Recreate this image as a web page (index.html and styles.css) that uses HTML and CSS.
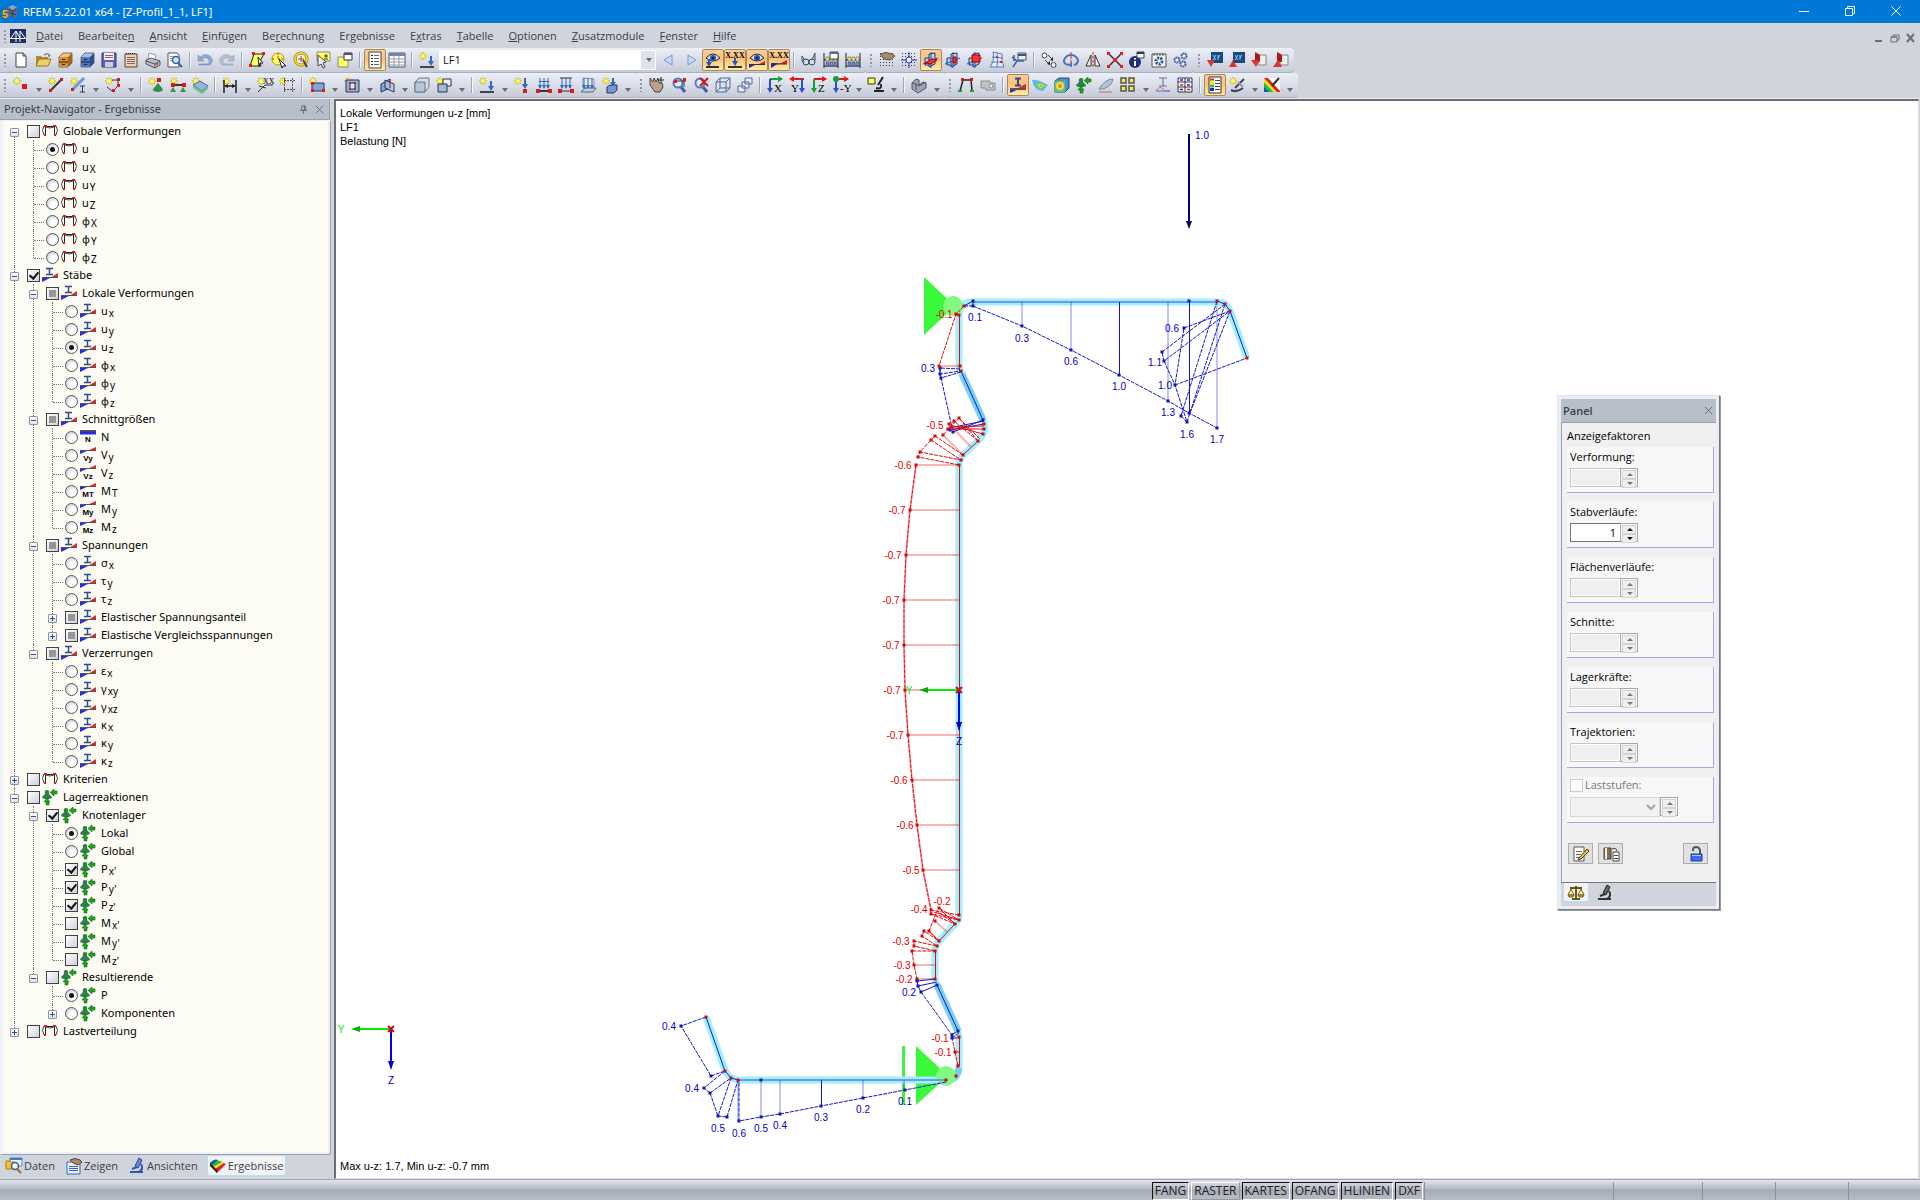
FILE: index.html
```html
<!DOCTYPE html>
<html lang="de">

<head>
    <meta charset="UTF-8">
    <meta name="viewport" content="width=device-width, initial-scale=1.0">
    <title>RFEM 5.22.01 x64 - [Z-Profil_1_1, LF1]</title>
    <link rel="stylesheet" href="styles.css">
</head>

<body>
    <header class="titlebar">
        <svg class="app-icon" viewBox="0 0 18 18">
            <path d="M7 3l5-2 5 3v8l-4 4-6-4z" fill="#5b6b82" />
            <path d="M7 3l5-2 5 3-5 3z" fill="#93a2b8" />
            <path d="M8 6l4 2v7M12 8l4-3M8 10l8 2" stroke="#26364d" fill="none" />
            <text x="0" y="16" class="app-five">5</text>
        </svg>
        <span class="title">RFEM 5.22.01 x64 - [Z-Profil_1_1, LF1]</span>
        <div class="window-buttons">
            <button aria-label="Minimieren"><svg viewBox="0 0 12 12"><path d="M1 6.500h10" /></svg></button>
            <button aria-label="Wiederherstellen"><svg viewBox="0 0 12 12"><path d="M1.500 3.500h7v7h-7zM3.500 3.500v-2h7v7h-2" /></svg></button>
            <button aria-label="Schließen"><svg viewBox="0 0 12 12"><path d="M1.500 1.500l9 9M10.500 1.500l-9 9" /></svg></button>
        </div>
    </header>

    <nav class="menubar">
        <span class="grip"></span>
        <svg class="menu-icon" viewBox="0 0 16 14">
            <path d="M0 0h16v14H0z" fill="#1d2f6b" />
            <path d="M0 9.500h16M6 2v11M10 2v11M6 2L1 9M6 2l4 7M10 2l5 7" stroke="#fff" fill="none" />
        </svg>
        <a href="#"><u>D</u>atei</a>
        <a href="#">Bearbeite<u>n</u></a>
        <a href="#"><u>A</u>nsicht</a>
        <a href="#"><u>E</u>infügen</a>
        <a href="#">Be<u>r</u>echnung</a>
        <a href="#">Er<u>g</u>ebnisse</a>
        <a href="#">E<u>x</u>tras</a>
        <a href="#"><u>T</u>abelle</a>
        <a href="#"><u>O</u>ptionen</a>
        <a href="#"><u>Z</u>usatzmodule</a>
        <a href="#"><u>F</u>enster</a>
        <a href="#"><u>H</u>ilfe</a>
        <div class="doc-buttons">
            <button aria-label="Fenster minimieren"><svg viewBox="0 0 10 10"><path d="M1 8h7" stroke-width="2" /></svg></button>
            <button aria-label="Fenster wiederherstellen"><svg viewBox="0 0 10 10"><path d="M1 4h6v5H1zM3 4V2h6v5H7M1 4h6" /></svg></button>
            <button aria-label="Fenster schließen"><svg viewBox="0 0 10 10"><path d="M1 1l7 8M8 1L1 9" stroke-width="2" /></svg></button>
        </div>
    </nav>

    <div class="toolbar">
        <div class="bar" data-icons="new open drawer drawerBlue save report print preview | undo redo | selPoly selCircle selRing selArrow selWin | navList* table | loadcase">
            <div class="combo">
                <select aria-label="Lastfall">
                    <option>LF1</option>
                </select>
            </div>
        </div>
        <div class="bar joined" data-icons="prev next eyeLoad* xxLoad* eyeRes* xxRes* | glasses abacusDoc abacus"></div>
        <div class="bar" data-icons="gridHand gridSnap planeXY* planeXZ planeYZ gridWarp clip | move rotate mirror scale info settings gears"></div>
        <div class="bar" data-icons="dbOut dbIn pdfOut pdfIn"></div>
    </div>
    <div class="toolbar">
        <div class="bar" data-icons="node v line member v arc v | support lineSup surfSup | dim v xx guides | surface v opening v intersect v solid solids v | loadcase v nodeLoad memberLoad lineLoad surfLoad freeLoad v"></div>
        <div class="bar" data-icons="pan zoomWin zoomAll cube cubes | viewX viewY viewZ viewNY v scope v | shape v"></div>
        <div class="bar" data-icons="frame camera | beam* contour cubeColor reaction deform panes v section tables | legend* wand v rainbow v"></div>
    </div>

    <main>
        <aside class="navigator">
            <div class="nav-head">
                <h2>Projekt-Navigator - Ergebnisse</h2>
                <button aria-label="Anheften"><svg viewBox="0 0 10 10"><path d="M3 1h4v5H3zM1 6h8M5 6v4M6 1v5" /></svg></button>
                <button aria-label="Schließen"><svg viewBox="0 0 10 10"><path d="M1 1l8 8M9 1L1 9" /></svg></button>
            </div>
            <div class="tree-box">
                <ul class="tree" id="tree"></ul>
            </div>
            <div class="nav-tabs">
                <button><svg class="icon" data-icon="tabData"></svg>Daten</button>
                <button><svg class="icon" data-icon="tabShow"></svg>Zeigen</button>
                <button><svg class="icon" data-icon="scopeBlue"></svg>Ansichten</button>
                <button class="active"><svg class="icon" data-icon="rainbowSheet"></svg>Ergebnisse</button>
            </div>
        </aside>

        <section class="view">
            <svg class="drawing" id="drawing" width="1582" height="1076" viewBox="336 101 1582 1076"></svg>
            <div class="view-title">
                <p>Lokale Verformungen u-z [mm]</p>
                <p>LF1</p>
                <p>Belastung [N]</p>
            </div>
            <p class="view-result">Max u-z: 1.7, Min u-z: -0.7 mm</p>

            <div class="panel">
                <div class="panel-head">
                    <h2>Panel</h2>
                    <button aria-label="Panel schließen"><svg viewBox="0 0 10 10"><path d="M1 1l8 8M9 1L1 9" /></svg></button>
                </div>
                <div class="panel-body">
                    <h3>Anzeigefaktoren</h3>
                    <div id="factors"></div>
                    <div class="factor">
                        <label class="steps"><input type="checkbox" disabled>Laststufen:</label>
                        <div class="spin-row">
                            <select class="step-select" aria-label="Laststufe" disabled></select>
                            <span class="spin">
                                <button class="up" aria-label="mehr" disabled></button>
                                <button class="down" aria-label="weniger" disabled></button>
                            </span>
                        </div>
                    </div>
                    <div class="panel-buttons">
                        <button aria-label="Bearbeiten"><svg class="icon" data-icon="edit"></svg></button>
                        <button aria-label="Kopieren"><svg class="icon" data-icon="copyDb"></svg></button>
                        <button class="lock" aria-label="Sperren"><svg class="icon" data-icon="lock"></svg></button>
                    </div>
                </div>
                <div class="panel-tabs">
                    <button class="active" aria-label="Faktoren"><svg class="icon" data-icon="scales"></svg></button>
                    <button aria-label="Filter"><svg class="icon" data-icon="scopeDark"></svg></button>
                </div>
            </div>
        </section>
    </main>

    <footer class="statusbar">
        <button>FANG</button>
        <button class="off">RASTER</button>
        <button>KARTES</button>
        <button>OFANG</button>
        <button>HLINIEN</button>
        <button>DXF</button>
        <span class="field f1"></span>
        <span class="field f2"></span>
        <span class="field f3"></span>
        <span class="field f3"></span>
        <span class="field f3"></span>
    </footer>

    <script src="app.js"></script>
</body>

</html>
```

FILE: styles.css
```css
:root {
    --chrome: #d0d4dd;
    --head: #b8bfca;
    --text: #3b3f48;
    --line: #9aa0ae;
    --ui-font: "Open Sans", "Noto Sans", sans-serif;
    --wide-font: "Noto Sans", "Open Sans", sans-serif;
}

* {
    box-sizing: border-box;
    margin: 0;
    padding: 0;
}

body {
    display: flex;
    flex-direction: column;
    height: 100vh;
    overflow: hidden;
    background: var(--chrome);
    font-family: var(--ui-font);
    font-size: 11px;
    line-height: 16px;
    color: var(--text);
}

button {
    border: 0;
    background: none;
    font: inherit;
    color: inherit;
}

h2,
h3 {
    font-size: 11px;
    font-weight: normal;
}

svg {
    display: block;
}

.icon {
    width: 16px;
    height: 16px;
    flex: none;
    overflow: visible;
}

/* title and menu */
.titlebar {
    display: flex;
    align-items: center;
    height: 23px;
    flex: none;
    background: #0078d7;
    color: #fff;
}

.title {
    font-family: var(--wide-font);
}

.app-icon {
    width: 16px;
    height: 16px;
    margin: 0 5px 0 2px;
}

.app-five {
    font: bold 12px "Liberation Sans", sans-serif;
    fill: #ffc020;
    stroke: #6b4a00;
    stroke-width: 1px;
    paint-order: stroke;
}

.window-buttons {
    display: flex;
    margin: 0 1px 2px auto;
}

.window-buttons button {
    width: 46px;
    padding: 0 17px;
}

.window-buttons svg {
    width: 12px;
    height: 12px;
    fill: none;
    stroke: #fff;
}

.menubar {
    display: flex;
    align-items: center;
    height: 25px;
    flex: none;
}

.menubar a {
    margin-right: 15px;
    color: var(--text);
    text-decoration: none;
}

.menu-icon {
    width: 16px;
    height: 14px;
    margin-right: 10px;
}

.doc-buttons {
    display: flex;
    gap: 6px;
    margin: 4px 4px 0 auto;
}

.doc-buttons svg {
    width: 10px;
    height: 10px;
    fill: none;
    stroke: #6e6e6e;
}

/* toolbars */
.toolbar {
    display: flex;
    height: 25px;
    flex: none;
}

.bar {
    display: flex;
    align-items: center;
    padding-right: 2px;
    border-bottom: 1px solid #aab0bd;
    border-radius: 0 4px 4px 0;
    background: linear-gradient(#eceff6, #d6dae5 60%, #c6cbd8);
}

.bar:has(.combo) {
    border-radius: 0;
}

.bar.joined {
    padding-left: 0;
}

.grip {
    width: 10px;
    height: 14px;
    flex: none;
    background: radial-gradient(circle at 5px 2px, #9297a3 1px, transparent 1px) 0 0 / 10px 4px;
}

.tool {
    display: flex;
    align-items: center;
    justify-content: center;
    width: 22px;
    height: 22px;
    border: 1px solid transparent;
}

.tool.on {
    border-color: #a98a55;
    border-radius: 2px;
    background: linear-gradient(#fcce9a, #fcc078 45%, #ffeba8);
}

.sep {
    width: 1px;
    height: 16px;
    margin: 0 4px 0 3px;
    background: #9ea4b2;
    box-shadow: 1px 0 #f4f6fa;
}

.drop {
    width: 13px;
    height: 22px;
    padding: 10px 3px 0 4px;
}

.drop::before,
.combo::after,
.spin button::before {
    content: "";
    display: block;
    border: 3px solid transparent;
    border-top: 4px solid #6a6d75;
    border-bottom: 0;
}

.combo {
    position: relative;
    width: 217px;
    margin-left: 1px;
}

.combo select {
    display: block;
    width: 100%;
    height: 20px;
    padding-left: 3px;
    border: 1px solid #fff;
    background: linear-gradient(to left, #dfe2e9 14px, #fff 14px);
    appearance: none;
    font: inherit;
    color: #111;
}

.combo::after {
    position: absolute;
    top: 8px;
    right: 4px;
}

/* navigator */
main {
    display: flex;
    flex: 1;
    min-height: 0;
    border-top: 1px solid #e8ebf1;
}

.navigator {
    display: flex;
    flex-direction: column;
    width: 334px;
    flex: none;
    padding-right: 4px;
}

.nav-head {
    display: flex;
    align-items: center;
    height: 21px;
    padding: 0 5px 0 4px;
    border-bottom: 1px solid var(--line);
    border-right: 1px solid var(--line);
    background: var(--head);
}

.nav-head h2 {
    margin-right: auto;
    font-family: var(--wide-font);
}

.nav-head button,
.panel-head button {
    margin-left: 7px;
}

.nav-head svg,
.panel-head svg {
    width: 9px;
    height: 9px;
    fill: none;
    stroke: #62666f;
}

.tree-box {
    flex: 1;
    min-height: 0;
    overflow: hidden;
    padding: 1px 0 0 7px;
    border: solid #eef1f8;
    border-width: 1px 2px 2px 3px;
    border-radius: 0 0 2px 0;
    box-shadow: 1px 1px var(--line);
    background: #fcfcf4;
    font-family: var(--wide-font);
}

.tree,
.tree ul {
    list-style: none;
}

.tree ul {
    margin-left: 19px;
}

.tree li {
    position: relative;
}

/* dotted branch lines */
.tree li::before {
    content: "";
    position: absolute;
    top: 0;
    bottom: 0;
    left: 4px;
    border-left: 1px dotted #777;
}

.tree > li:first-child::before {
    top: 10px;
}

.tree li:last-child::before {
    bottom: auto;
    height: 10px;
}

.row {
    display: flex;
    align-items: center;
    height: 18px;
    color: #000;
}

.row .branch {
    width: 10px;
    height: 1px;
    margin: 2px 2px 0 5px;
    border-top: 1px dotted #777;
}

.expander {
    position: relative;
    width: 9px;
    height: 9px;
    margin: 2px 8px 0 0;
    border: 1px solid #8e959f;
    border-radius: 1px;
    background: linear-gradient(#fff, #dfe3ea);
}

.expander::before,
.expander.plus::after {
    content: "";
    position: absolute;
    top: 3px;
    left: 1px;
    width: 5px;
    height: 1px;
    background: #2d4fa0;
}

.expander.plus::after {
    transform: rotate(90deg);
}

.row label {
    display: flex;
    align-items: center;
}

.row .icon {
    margin: 0 5px 0 2px;
}

.row sub {
    position: relative;
    top: 2px;
    margin-left: 1px;
    font-size: 10px;
    line-height: 10px;
    vertical-align: baseline;
}

.row input {
    display: flex;
    align-items: center;
    justify-content: center;
    width: 13px;
    height: 13px;
    border: 1px solid #3f4248;
    background: linear-gradient(135deg, #fff, #cdd1da);
    appearance: none;
}

.row input[type="radio"] {
    border-color: #555;
    border-radius: 50%;
    background: radial-gradient(circle at 65% 65%, #fff 30%, #b8c0d4);
}

.row input[type="radio"]:checked::before {
    content: "";
    width: 5px;
    height: 5px;
    border-radius: 50%;
    background: #111;
}

.row input[type="checkbox"]:checked::before {
    content: "";
    width: 4px;
    height: 7px;
    margin-top: -2px;
    border: solid #111;
    border-width: 0 2px 2px 0;
    transform: rotate(40deg);
}

.row input[type="checkbox"]:indeterminate::before {
    content: "";
    width: 7px;
    height: 7px;
    background: #969696;
}

.nav-tabs {
    display: flex;
    height: 23px;
    margin-top: 2px;
    padding-left: 4px;
    gap: 7px;
}

.nav-tabs button {
    display: flex;
    align-items: center;
    gap: 2px;
    height: 20px;
    padding: 0 2px;
}

.nav-tabs .active,
.panel-tabs .active {
    border: 1px solid #b4e4ea;
    border-top: 0;
    border-radius: 0 0 3px 3px;
    background: #f2f3f5;
}

/* drawing area */
.view {
    position: relative;
    flex: 1;
    overflow: hidden;
    margin-right: 1px;
    border: solid #6d6d6d;
    border-width: 2px 1px 1px 2px;
    border-right-color: #dedede;
    border-bottom-color: #dedede;
    background: #fff;
}

.drawing {
    position: absolute;
    top: 0;
    left: 0;
}

.view-title,
.view-result {
    position: absolute;
    left: 4px;
    font: 11px/14px "Liberation Sans", sans-serif;
    color: #000;
}

.view-title {
    top: 5px;
}

.view-result {
    bottom: 5px;
}

.drawing path,
.drawing line {
    fill: none;
}

.drawing .section {
    stroke: #a0f0ff;
    stroke-width: 7;
    stroke-linejoin: round;
}

.drawing .section-dark {
    stroke: #78d0f0;
    stroke-width: 7;
}

.drawing .blue {
    stroke: #1414d2;
}

.drawing .red {
    stroke: #e60a0a;
}

.drawing .dash {
    stroke-dasharray: 4 1;
}

.drawing .light {
    opacity: 0.5;
}

.drawing .red.light {
    stroke-width: 2;
    opacity: 0.3;
}

.drawing .flange {
    stroke: #6c9cf0;
    stroke-width: 2;
}

.drawing .dot-blue {
    fill: #1414b4;
}

.drawing .dot-red {
    fill: #d20a0a;
}

.drawing .support {
    fill: #3cf83c;
}

.drawing .hinge {
    fill: #80fa80;
}

.drawing text {
    font: 10px "Liberation Sans", sans-serif;
    text-anchor: middle;
}

.drawing .t-blue {
    fill: #0000c8;
}

.drawing .t-red {
    fill: #e60000;
}

.drawing .t-green {
    fill: #00e600;
}

/* floating panel */
.panel {
    position: absolute;
    top: 294px;
    right: 198px;
    display: flex;
    flex-direction: column;
    width: 163px;
    padding: 3px;
    border: 1px solid #e1e5ee;
    border-right-color: #777;
    border-bottom-color: #777;
    box-shadow: 1px 1px #9a9a9a;
    background: #e9edf5;
}

.panel-head {
    display: flex;
    align-items: center;
    justify-content: space-between;
    height: 24px;
    padding: 0 3px 0 2px;
    border-bottom: 1px solid var(--line);
    background: var(--head);
}

.panel-head h2 {
    font-weight: 600;
}

.panel-body {
    height: 460px;
    padding: 3px 2px 0 5px;
    border-left: 1px solid var(--line);
    border-bottom: 1px solid #777;
    background: #f0f0f0;
    color: #000;
}

.panel-body h3 {
    height: 21px;
    line-height: 20px;
}

.factor {
    height: 46px;
    margin-bottom: 9px;
    padding: 2px 0 0 3px;
    border: solid #a5a5ee;
    border-width: 0 1px 1px 0;
    background: #f7f7f7;
}

.factor label {
    display: block;
    height: 19px;
    line-height: 16px;
}

.spin-row {
    display: flex;
}

.spin-row input {
    width: 50px;
    height: 19px;
    padding-right: 4px;
    border: 1px solid #777;
    border-right: 0;
    background: #fff;
    font: inherit;
    text-align: right;
}

.spin-row input:disabled {
    border-color: #c6c6c6;
    background: #efefef;
    box-shadow: inset 0 0 0 1px #fff;
}

.spin {
    display: flex;
    flex-direction: column;
    width: 18px;
    height: 19px;
    padding: 1px;
    border: 1px solid #a9a9a9;
    background: #f7f7f7;
}

.spin button {
    flex: 1;
    padding: 2px 4px;
    border: 1px solid #d4d4d4;
    background: #efefef;
}

.spin button::before {
    border-top: 3px solid #111;
}

.spin .up::before {
    transform: scaleY(-1);
}

.spin button:disabled::before {
    border-top-color: #777;
}

.factor .steps {
    display: flex;
    align-items: center;
    height: 14px;
    margin: -1px 0 5px;
    color: #777;
}

.steps input {
    width: 13px;
    height: 13px;
    margin-right: 2px;
    border: 1px solid #ccc;
    background: #fff;
    appearance: none;
}

.step-select {
    width: 90px;
    height: 20px;
    border: 1px solid #ccc;
    background: #efefef;
}

.panel-buttons {
    display: flex;
    gap: 5px;
    padding: 11px 6px 0 1px;
}

.panel-buttons button {
    display: flex;
    justify-content: center;
    align-items: center;
    width: 25px;
    height: 21px;
    border: 1px solid #adadad;
    background: #e1e1e1;
}

.panel-buttons .lock {
    margin-left: auto;
}

.panel-tabs {
    display: flex;
    gap: 4px;
    height: 23px;
    padding-left: 2px;
    background: var(--chrome);
}

.panel-tabs button {
    height: 19px;
    padding: 1px 4px 0;
}

/* status bar */
.statusbar {
    display: flex;
    justify-content: flex-end;
    gap: 2px;
    height: 21px;
    flex: none;
    padding-top: 2px;
    border-top: 1px solid #a2a6b0;
    background: linear-gradient(#e4e4ea, #b2b9c8 45%, #a4abb5 50%, #babcc6);
    font-size: 12px;
}

.statusbar button {
    height: 18px;
    padding: 0 2px;
    border: 1px solid #fff;
    border-top-color: #111;
    border-left-color: #111;
    line-height: 16px;
    color: #222;
}

.statusbar .off {
    border-color: #fff #999 #999 #fff;
    line-height: 14px;
}

.field {
    margin-left: -1px;
    border-left: 1px solid #8d929c;
}

.f1 {
    width: 188px;
}

.f2 {
    width: 88px;
}

.f3 {
    width: 72px;
}
```

FILE: app.js
```js
// small pieces shared by several icons
var spark = '<path d="M4 0v8M0 4h8M1 1l6 6M7 1L1 7" stroke="#d2b400" fill="none"/><circle cx="4" cy="4" r="2" fill="#ffff50"/>';
var lens = '<path d="M10 10l4 5" stroke="#3c5fae" stroke-width="3"/><circle cx="7" cy="6" r="4.500" fill="#dcecff" stroke="#5878b8" stroke-width="2"/>';
var eye = '<path d="M1 6q7-8 14 0q-7 6-14 0z" fill="#cfe0f4" stroke="#222"/><circle cx="8" cy="6" r="3" fill="#2756b8"/><circle cx="8" cy="6" r="1" fill="#000"/>';
var arrows = '<path d="M4 1v10M8 1v10M12 1v10" stroke="#3566c4" fill="none"/><path d="M2 8h4l-2 4zM6 8h4l-2 4zM10 8h4l-2 4z" fill="#3566c4"/>';
var ibeam = '<path d="M5 1.500h6M5 8.500h6M8 1v8" stroke="#334a86" stroke-width="2" fill="none"/>';
var wedge = '<path d="M0 16v-4h9zM16 7v5H8z" fill="#2a2ae0"/><path d="M16 7v5H6z" fill="#e02a2a"/><path d="M0 12h16" stroke="#555" stroke-width="2"/>';
var books = '<path d="M1 1v15M15 1v15M1 8h14M1 14h14" stroke="#222" fill="none"/><path d="M3 5h3v4H3zM7 5h3v4H7zM11 5h3v4h-3z" fill="#f0e090" stroke="#554" stroke-width=".5"/><path d="M3 10h3v4H3zM7 10h3v4H7zM11 10h3v4h-3z" fill="#6f8fd0" stroke="#335" stroke-width=".5"/>';
var dots = '<path d="M1 1.500h15M1 4.500h15M1 7.500h15M1 10.500h15M1 13.500h15" stroke="#444" stroke-dasharray="1 2" fill="none"/>';
var drawerShape = function (a, b, c) {
    return '<path d="M2 5l4-4h9v10l-4 4H2z" fill="' + a + '" stroke="#443" stroke-width=".7"/><path d="M2 5h9v10H2z" fill="' + b + '"/><path d="M11 5l4-4v10l-4 4z" fill="' + c + '"/><path d="M2 10h9M5 7.500h3M5 12.500h3" stroke="#222"/>';
};
var planes = function (a, b) {
    return '<path d="M2 6h8v7H2z" fill="' + a + '" stroke="#1d3c78"/><path d="M6 2l6-1v11l-6 3z" fill="' + b + '" stroke="#1d3c78" fill-opacity=".8"/><path d="M0 12l15-6M8 0v16" stroke="#1d50a0" fill="none"/>';
};
var axis = function (h, v, t, left) {
    return '<path d="M' + (left ? '15 2H3' : '3 2h12') + '" stroke="' + h + '" stroke-width="2"/><path d="' + (left ? 'M0 2l5-3v6z' : 'M16 2l-5-3v6z') + '" fill="' + h + '"/>' +
        '<path d="M' + (left ? 13 : 3) + ' 2v12" stroke="' + v + '" stroke-width="2"/><path d="M' + (left ? 10 : 0) + ' 11h6l-3 5z" fill="' + v + '"/>' +
        '<text x="' + (left ? 2 : 7) + '" y="15" font-family="Liberation Serif" font-size="11">' + t + '</text>';
};
var force = function (t) {
    return '<path d="M0 7V3h9z" fill="#2a2ae0"/><path d="M16 0v4H7z" fill="#e02a2a"/><path d="M0 3.500h16" stroke="#555"/>' +
        '<text x="8" y="14" text-anchor="middle" font-family="Liberation Sans" font-weight="bold" font-size="8">' + t + '</text>';
};

var icons = {
    'new': '<path d="M3 1h7l3 3v11H3z" fill="#fff" stroke="#444"/><path d="M10 1v3h3" fill="none" stroke="#444"/>',
    open: '<path d="M1 4h5l1 1h6v9H1z" fill="#b08c2c"/><path d="M1 14l3-7h12l-3 7z" fill="#ecd070" stroke="#9b7716"/><path d="M9 3q4-3 6 1l-2 0" stroke="#555" fill="none"/>',
    drawer: drawerShape('#f5c57a', '#d98c2c', '#a8641a'),
    drawerBlue: drawerShape('#a8c0ec', '#4a74c4', '#2c4c94'),
    save: '<path d="M1 1h14v14H1z" fill="#5c62b8" stroke="#333a80"/><path d="M3 1h10v7H3z" fill="#f3f3f6"/><path d="M4 3.500h8M4 5.500h8" stroke="#b85050"/><path d="M4 10h8v5H4z" fill="#ccd"/>',
    report: '<path d="M2 2h12v13H2z" fill="#e9d4b8" stroke="#5d4224"/><path d="M4 5.500h8M4 7.500h8M4 9.500h8M4 11.500h8" stroke="#866"/><path d="M3 1.500h10" stroke="#222" stroke-dasharray="1 1"/>',
    print: '<path d="M4 1l7 2-1 6-7-2z" fill="#fff" stroke="#99a"/><path d="M1 8l5-2 9 3v4l-5 3-9-4z" fill="#b9bccb" stroke="#555"/><path d="M1 9l9 3 5-3M10 12v4" stroke="#555" fill="none"/><circle cx="12" cy="12" r="1" fill="#c33"/>',
    preview: '<path d="M1 1h9l2 2v12H1z" fill="#fff" stroke="#555"/><path d="M3 4.500h6M3 6.500h3M3 8.500h3" stroke="#999"/><circle cx="9" cy="8" r="3.500" fill="#cfe4ff" stroke="#3c5fae" stroke-width="1.500"/><path d="M11 11l4 4" stroke="#3c5fae" stroke-width="2"/>',
    undo: '<path d="M1 3v6h6l-2-2q4-3 7 1q1 2-1 4H2v1h11q4-4 1-8q-5-5-11 0z" fill="#8fa8cc" stroke="#6c86b0" stroke-width=".5"/>',
    redo: '<path d="M15 3v6H9l2-2q-4-3-7 1q-1 2 1 4h9v1H3q-4-4-1-8q5-5 11 0z" fill="#b4c0d2" stroke="#8896ac" stroke-width=".5"/>',
    selPoly: '<path d="M5 2h10l-4 7 1 5H1z" fill="#ffff60" stroke="#222"/><path d="M3 0h3v3H3zM13 0h3v3h-3zM0 12h3v3H0z" fill="#d22"/><path d="M9 5l5 6-3 0-1 4z" fill="#fff" stroke="#222"/>',
    selCircle: '<circle cx="7" cy="7" r="6" fill="#ffff60" stroke="#b90"/><path d="M7 1v6h6M1 7h3" stroke="#d22" stroke-dasharray="2 1" fill="none"/><path d="M8 7l7 7-3 0-1 2z" fill="#fff" stroke="#222"/>',
    selRing: '<circle cx="8" cy="7" r="6" fill="#fff" stroke="#7a6a00" stroke-width="3"/><circle cx="8" cy="7" r="6" fill="none" stroke="#f0d820" stroke-width="2"/><path d="M8 4v6M5 7h6" stroke="#d22"/><path d="M10 8l4 7" stroke="#444" stroke-width="2"/>',
    selArrow: '<path d="M2 0h13v9H2z" fill="#ffff60" stroke="#887"/><path d="M9 4h4M11 2v4M9 7h4" stroke="#333"/><path d="M3 3l8 7-3 1 2 4-2 1-2-4-3 2z" fill="#eee" stroke="#444"/>',
    selWin: '<path d="M1 5h10v10H1z" fill="#ffff60" stroke="#887"/><path d="M7 1h8v7H7z" fill="#fff" stroke="#333"/><path d="M7 1h8v2H7z" fill="#555"/>',
    navList: '<path d="M2 0h12v16H2z" fill="#fff" stroke="#444"/><path d="M4 3.500h2M4 6.500h2M4 9.500h2M4 12.500h2" stroke="#222"/><path d="M7 3.500h5M7 6.500h5M7 9.500h5M7 12.500h5" stroke="#667"/>',
    table: '<path d="M0 1h16v14H0z" fill="#fff" stroke="#556"/><path d="M0 1h16v3H0z" fill="#6f86b4"/><path d="M0 7h16M0 10h16M0 13h16M5 4v11M10 4v11" stroke="#99a" fill="none"/>',
    loadcase: spark + '<path d="M12 4v8" stroke="#3566c4" stroke-width="2"/><path d="M9 9h6l-3 5z" fill="#3566c4"/><path d="M1 15h14" stroke="#444" stroke-width="2"/>',
    prev: '<path d="M11 3v10L3 8z" fill="#c9d9f6" stroke="#7b98d6"/>',
    next: '<path d="M5 3v10l8-5z" fill="#c9d9f6" stroke="#7b98d6"/>',
    eyeLoad: eye + '<path d="M4 7v6" stroke="#2756b8" stroke-width="2"/><path d="M1 10h6l-3 5z" fill="#2756b8"/><path d="M1 15h13" stroke="#333" stroke-width="2"/>',
    xxLoad: '<text x="8" y="6" text-anchor="middle" font-family="Liberation Serif" font-weight="bold" font-size="8">X.XX</text><path d="M8 6v6" stroke="#2756b8" stroke-width="2"/><path d="M5 9h6l-3 5z" fill="#2756b8"/><path d="M1 15h14" stroke="#333" stroke-width="2"/>',
    eyeRes: eye + '<path d="M0 16v-4h8z" fill="#22d"/><path d="M16 9v4H8z" fill="#d22"/><path d="M0 12.500h16" stroke="#333"/>',
    xxRes: '<text x="8" y="6" text-anchor="middle" font-family="Liberation Serif" font-weight="bold" font-size="8">X.XX</text><path d="M0 16v-5h8z" fill="#22d"/><path d="M16 8v4H8z" fill="#d22"/><path d="M0 12h16" stroke="#333"/>',
    glasses: '<path d="M1 4l4 6q-3 2-4-1zM14 1l-4 9q5 0 4-4z" fill="#bcd" stroke="#456"/><circle cx="5" cy="10" r="3" fill="#cde" stroke="#345"/><circle cx="11" cy="10" r="3" fill="#cde" stroke="#345"/>',
    abacusDoc: books + '<path d="M7 0h8v7H7z" fill="#fff" stroke="#444"/><path d="M7 0h8v2H7z" fill="#668"/>',
    abacus: books,
    gridHand: dots + '<path d="M1 2q6-3 12 0l3 2-5 4-6-1z" fill="#a98b6c" stroke="#554"/>',
    gridSnap: dots + '<path d="M8 0v16M0 8h16" stroke="#2442c0"/><circle cx="8" cy="8" r="3" fill="#eef" stroke="#2442c0"/>',
    planeXY: planes('#b9d2f4', '#b9d2f4') + '<path d="M2 11l7-4 5 1-6 4z" fill="#f33" stroke="#900"/>',
    planeXZ: planes('#b9d2f4', '#b9d2f4') + '<path d="M8 5h3v6H8z" fill="#f33" stroke="#900"/>',
    planeYZ: planes('#b9d2f4', '#b9d2f4') + '<path d="M5 3h8v7H5z" fill="#f33" stroke="#900"/>',
    gridWarp: '<path d="M4 0q2 8-3 15h14q-3-7-2-13zM3 5l11 1M2 10h12M8 1q1 8 0 14" fill="#dcebff" stroke="#5a7fb4"/><path d="M7 4h2v2H7zM11 9h2v2h-2z" fill="#d22"/>',
    clip: '<path d="M7 1h8v7H7z" fill="#e6ecf8" stroke="#456"/><path d="M7 3h8" stroke="#456" stroke-width="2"/><path d="M1 5l5 4-4 6M6 9h7M3 3v6" stroke="#3a5f9c" fill="none" stroke-width="1.500"/>',
    move: '<circle cx="3.500" cy="3.500" r="2.500" fill="#fff" stroke="#444"/><circle cx="12.500" cy="13" r="2.500" fill="#fff" stroke="#444"/><path d="M7 3l5 5M4 8l4 4" stroke="#444" fill="none"/><path d="M12 9V5L9 8zM9 13V9l-3 3z" fill="#222"/>',
    rotate: '<path d="M8 0v16" stroke="#d22" stroke-dasharray="3 1"/><path d="M6 13q-6-1-5-5q2-5 7-5t7 5q0 4-4 5" fill="none" stroke="#4a74b8" stroke-width="2"/><path d="M9 10v5l-4-2z" fill="#4a74b8"/>',
    mirror: '<path d="M8 0v16" stroke="#d22" stroke-dasharray="3 1"/><path d="M6 3v11H1zM10 3v11h5z" fill="#eee" stroke="#333"/>',
    scale: '<path d="M2 2l12 12M14 2L2 14" stroke="#333" stroke-width="1.500"/><path d="M0 0h3v3H0zM13 0h3v3h-3zM0 13h3v3H0zM13 13h3v3h-3zM6 6h4v4H6z" fill="#e22020"/>',
    info: '<circle cx="6" cy="10" r="6" fill="#1d2f78"/><path d="M6 9v5M6 6v1.500" stroke="#fff" stroke-width="2"/><path d="M8 0h7v6H8z" fill="#fff" stroke="#444"/><path d="M8 1h7" stroke="#336" stroke-width="2"/>',
    settings: '<path d="M1 2h14v13H1z" fill="#f1f1ee" stroke="#555"/><path d="M3 1v3M6 1v3M9 1v3M12 1v3" stroke="#555"/><circle cx="8" cy="9" r="3" fill="#fff" stroke="#31559c" stroke-width="3" stroke-dasharray="2 1"/>',
    gears: '<g fill="#eef" stroke="#4a66a4" stroke-width="2" stroke-dasharray="2 .5"><circle cx="4" cy="8" r="2.500"/><circle cx="11" cy="4" r="2.500"/><circle cx="10" cy="12" r="2.500"/></g>',
    dbOut: '<path d="M4 0h12v11H4z" fill="#174a80"/><path d="M6 3l3 5M9 3L6 8M11 3v5M13 3l-2 3" stroke="#9cf"/><path d="M0 8h8l-4 7z" fill="#e03030"/>',
    dbIn: '<path d="M4 0h12v11H4z" fill="#174a80"/><path d="M6 3l3 5M9 3L6 8M11 3v5M13 3l-2 3" stroke="#9cf"/><path d="M0 15h8L4 8z" fill="#e03030"/>',
    pdfOut: '<path d="M7 3h8v10H7z" fill="#eee" stroke="#888"/><path d="M4 0l5 3v7H4z" fill="#b01818"/><path d="M0 8h9l-4 7z" fill="#e03030"/>',
    pdfIn: '<path d="M7 3h8v10H7z" fill="#eee" stroke="#888"/><path d="M4 0l5 3v7H4z" fill="#b01818"/><path d="M0 15h9L5 8z" fill="#e03030"/>',
    node: spark + '<path d="M9 7h5v5H9z" fill="#e01818"/>',
    line: spark + '<path d="M3 13L13 3" stroke="#333" stroke-width="2"/><path d="M1 12h3v3H1zM12 1h3v3h-3z" fill="#e01818"/>',
    member: spark + '<path d="M3 12L14 1" stroke="#6f9ad8" stroke-width="3"/><path d="M1 11h3v3H1z" fill="#e01818"/><path d="M10 9h5M10 15h5M12.500 9v6" stroke="#336"/>',
    arc: spark + '<path d="M7 3h6v6l-5 5M2 10l5 4" stroke="#333" fill="none"/><path d="M12 1h3v3h-3zM12 7h3v3h-3zM7 12h3v3H7z" fill="#e01818"/>',
    support: spark + '<path d="M9 1h4v4H9z" fill="#e01818"/><path d="M10 6l4 5q3 3-4 4q-8-1-4-4z" fill="#2f8f48"/>',
    lineSup: spark + '<path d="M3 8h11" stroke="#333" stroke-width="2"/><path d="M1 6h4v4H1zM12 6h4v4h-4z" fill="#e01818"/><path d="M3 10l3 5H0zM13 10l3 5h-6z" fill="#2fa04a"/>',
    surfSup: spark + '<path d="M1 8l7-4 8 5-6 5z" fill="#8fb8dc" stroke="#568"/><path d="M1 8v3l9 6 6-5V9l-6 5z" fill="#6fbf8c"/>',
    dim: spark + '<path d="M2 3v13M14 3v13M3 9h10" stroke="#222" stroke-width="1.500"/><path d="M2 9l4-2v4zM14 9l-4-2v4z" fill="#222"/>',
    xx: spark + '<text x="6" y="7" font-family="Liberation Serif" font-size="8">XX</text><path d="M1 15l7-7h8M2 9l7 2" stroke="#333" fill="none"/>',
    guides: spark + '<path d="M5 3.500h11M5 12.500h11M5.500 1v15M13.500 1v15" stroke="#555" stroke-dasharray="2 1" fill="none"/>',
    surface: spark + '<path d="M3 6h12v8H3z" fill="#7fa8d8" stroke="#335"/><path d="M2 5h3v3H2zM2 12h3v3H2zM13 12h3v3h-3z" fill="#e01818"/>',
    opening: spark + '<path d="M2 3h13v12H2z" fill="#8fb4e0" stroke="#335"/><path d="M6 6h5v6H6z" fill="#dfe8f4" stroke="#335"/><path d="M5 5h2v2H5zM10 5h2v2h-2zM5 11h2v2H5zM10 11h2v2h-2z" fill="#c22"/>',
    intersect: '<path d="M2 7l9-5v9l-9 4z" fill="#7fa8d8" stroke="#335"/><path d="M6 3l9 4v8l-9-4z" fill="#a9c8ea" stroke="#335" fill-opacity=".7"/><path d="M11 2v9" stroke="#c22"/>',
    solid: '<path d="M1 5l4-4h10v9l-4 5H1z" fill="#d3dce8" stroke="#678"/><path d="M1 5h10v10H1z" fill="#b5c4d8" stroke="#678"/>',
    solids: spark + '<path d="M7 2h8v7H7z" fill="#eef" stroke="#333"/><path d="M2 7h9v8H2z" fill="#9fbce0" stroke="#333"/>',
    nodeLoad: spark + '<path d="M11 1v8" stroke="#3566c4" stroke-width="2"/><path d="M8 7h6l-3 5z" fill="#3566c4"/><path d="M9 12h4v4H9z" fill="#e01818"/>',
    memberLoad: '<path d="M3 4.500h10" stroke="#3566c4"/>' + arrows + '<path d="M2 14h12" stroke="#333" stroke-width="2"/><path d="M0 12h4v4H0zM12 12h4v4h-4z" fill="#e01818"/>',
    lineLoad: arrows + '<path d="M2 1h12M2 14h12" stroke="#333"/><path d="M0 12h4v4H0zM12 12h4v4h-4z" fill="#e01818"/>',
    surfLoad: '<path d="M3 1l11 1v9H3z" fill="#dfe8f4" stroke="#89a"/>' + arrows + '<path d="M1 15l4-4h11l-3 4z" fill="#b8cbe4" stroke="#567" fill-opacity=".7"/>',
    freeLoad: spark + '<path d="M11 1v6" stroke="#3566c4" stroke-width="2"/><path d="M8 5h6l-3 4z" fill="#3566c4"/><path d="M5 10l3-2h7v5l-3 3H5z" fill="#6f9ad8" stroke="#335"/>',
    pan: '<path d="M1 1l3 4 1-4 2 4 2-4 1 5 3 0 1 4-3 5H6L1 8z" fill="#b7a28c" stroke="#4a4038"/><path d="M12 0v6M9 3h6" stroke="#222"/>',
    zoomWin: lens + '<path d="M4 4h11M13 1v9" stroke="#333"/><path d="M3 3h3v3H3zM12 1h3v3h-3z" fill="#e01818"/>',
    zoomAll: lens + '<path d="M7 1l8 8M15 1L7 9" stroke="#d01818" stroke-width="2"/>',
    cube: '<path d="M1 5h10v10H1zM5 1h10v10H5zM1 5l4-4M11 5l4-4M11 15l4-4M1 15l4-4" fill="#dde6f4" fill-opacity=".5" stroke="#53699a"/>',
    cubes: '<path d="M8 1h7v6H8zM5 5h7v6H5zM1 9h7v6H1z" fill="#e6ecf6" stroke="#53699a"/>',
    viewX: axis('#18a038', '#2a4fd0', 'X'),
    viewY: axis('#e01818', '#2a4fd0', 'Y', true),
    viewZ: axis('#e01818', '#18a038', 'Z'),
    viewNY: axis('#e01818', '#2a4fd0', '-Y') + '<circle cx="3" cy="2" r="3" fill="#18a038"/>',
    scope: '<path d="M0 1h7v6H0z" fill="#ffff50" stroke="#333"/><path d="M15 0l-5 8M6 14h10M8 11q6 2 5-4" stroke="#222" stroke-width="2" fill="none"/>',
    shape: '<path d="M1 6l4-4 3 1v5l4-3 3 1v5l-8 5-6-4z" fill="#9ba5b4" stroke="#4a5462"/><path d="M5 7l3 2 7-4M5 7v6M1 6l4 1" stroke="#4a5462" fill="none"/>',
    frame: '<path d="M2 14L5 3h8l1 11" stroke="#222" fill="none" stroke-width="1.500"/><path d="M3 1h3v3H3zM12 1h3v3h-3z" fill="#e01818"/><path d="M0 13h4v2H0zM12 13h4v2h-4z" fill="#18a038"/>',
    camera: '<path d="M1 4h9v2h5v7H6v-2H1z" fill="#c0c3c8" stroke="#8a8d94"/><circle cx="11" cy="9" r="2" fill="#eee" stroke="#888"/>',
    beam: ibeam + wedge,
    contour: '<path d="M0 3q5-1 16 5l-5 6Q2 14 0 3z" fill="#58b8f0"/><path d="M3 5q5 0 11 3l-4 4Q4 11 3 5z" fill="#60d870"/><path d="M6 7q4 0 6 1l-3 3q-3-1-3-4z" fill="#f0e040"/><path d="M7 8h3l-1 2z" fill="#f07030"/>',
    cubeColor: '<path d="M1 4l4-3h10v10l-4 4H1z" fill="#4a90d8" stroke="#346"/><path d="M1 4h10v11H1z" fill="#58c878"/><circle cx="6" cy="9" r="4" fill="#f0e040"/><circle cx="6" cy="9" r="2" fill="#f08030"/>',
    reaction: '<path d="M5 1q3 0 2 4l3 3q0 2-5 2T0 8l3-3q-1-4 2-4z" fill="#2f8048"/><path d="M15 2v3h-3v2L8 3.500 12 0v2zM4 16v-3H2l3-4 3 4H7v3z" fill="#17a817" stroke="#0a5a0a" stroke-width=".5"/>',
    deform: '<path d="M1 12Q7 2 15 2q-1 7-10 10z" fill="#b8c2d4" stroke="#7a879c"/><path d="M1 15h13" stroke="#c88" stroke-width="1.500"/>',
    panes: '<path d="M1 1h5v5H1zM9 1h5v5H9zM1 9h5v5H1zM9 9h5v5H9z" fill="#f0e060" stroke="#554" stroke-width="1.500"/>',
    section: '<path d="M4 1h8M8 1v8M4 9h8" stroke="#5a6ea4" fill="none"/><path d="M1 14q4-6 7-2t7 1" stroke="#d66" fill="none"/><path d="M1 14h14" stroke="#66d"/>',
    tables: '<path d="M1 1h14v14H1z" fill="#fff" stroke="#334"/><path d="M1 5h14M1 10h14M8 1v14" stroke="#334"/><path d="M3 3h3M10 3h3M3 12.500h3M10 8h3" stroke="#22c" stroke-width="1.500"/><path d="M3 8h3M10 12.500h3" stroke="#c22" stroke-width="1.500"/>',
    legend: '<path d="M2 0h12v16H2z" fill="#fff" stroke="#333"/><path d="M3 2.500h4" stroke="#e22" stroke-width="2"/><path d="M3 5.500h4" stroke="#ee2" stroke-width="3"/><path d="M3 9h4" stroke="#2c2" stroke-width="3"/><path d="M3 12.500h4" stroke="#22e" stroke-width="3"/><path d="M8 3.500h5M8 6.500h5M8 9.500h5M8 12.500h5" stroke="#444"/>',
    wand: spark + '<path d="M15 2L6 11M2 13q6 3 12-2" stroke="#445" stroke-width="2" fill="none"/><path d="M9 5l5 5" stroke="#89a" stroke-width="2"/>',
    rainbow: '<path d="M0 1h16v14H0z" fill="#fff"/><path d="M0 9v6h6z" fill="#1a4ae0"/><path d="M0 5v5l5 5h5z" fill="#20c030"/><path d="M0 1v4l10 10h4z" fill="#f0e020"/><path d="M0 1h4l12 13v1h-3z" fill="#e02020"/><path d="M15 1L8 9" stroke="#333" stroke-width="2"/>',
    rainbowSheet: '<path d="M0 6q4-6 16 0l-9 9z" fill="#e02020"/><path d="M0 5q6-5 14 0l-9 6z" fill="#f0e020"/><path d="M0 5q6-5 12-1l-9 5z" fill="#20c030"/><path d="M0 5q4-5 8-3L2 7z" fill="#1a4ae0"/><path d="M0 5l7 7v3L0 8z" fill="#222"/>',
    globalDef: '<path d="M3 3.500h10M3.500 3v10M12.500 3v10" stroke="#222" fill="none"/><path d="M2 3q-3 4 0 9M14 3q3 4 0 9M4 4q4 2 8 0" stroke="#444" fill="none"/><path d="M2 2h3v2H2zM11 2h3v2h-3zM2 11h2v2H2zM12 11h2v2h-2z" fill="#e01818"/>',
    member2: '<path d="M4 1.500h7M4 7.500h7M7.500 1v7" stroke="#334a86" stroke-width="1.500" fill="none"/><path d="M0 15v-4h8z" fill="#2a2ae0"/><path d="M16 6v5H8z" fill="#e02a2a"/><path d="M0 10.500h16" stroke="#555"/>',
    fN: '<path d="M0 2h16" stroke="#555" stroke-width="2"/><path d="M0 4h16" stroke="#2a2ae0" stroke-width="3"/><text x="8" y="13" text-anchor="middle" font-family="Liberation Sans" font-weight="bold" font-size="8">N</text>',
    fVy: force('Vy'),
    fVz: force('Vz'),
    fMT: force('MT'),
    fMy: force('My'),
    fMz: force('Mz'),
    tabData: '<path d="M4 0h12v8H4z" fill="#e8f0ff" stroke="#58c"/><path d="M4 1h12" stroke="#47c" stroke-width="2"/><path d="M0 3h4l1 1h3v7H0z" fill="#f4c030" stroke="#a80"/><circle cx="9" cy="8" r="3.500" fill="#dff" stroke="#557" stroke-width="1.500"/><path d="M11 11l4 4" stroke="#964" stroke-width="2"/>',
    tabShow: '<path d="M1 4h13v12H1z" fill="#e8f0ff" stroke="#36b"/><path d="M3 8.500h9M3 10.500h9M3 12.500h9" stroke="#36b"/><path d="M4 2q5-3 10 0l2 2-4 3-5-2z" fill="#a98b6c" stroke="#543"/>',
    scopeBlue: '<path d="M1 14h13" stroke="#3258b0" stroke-width="2"/><path d="M10 0l3 2-4 8-3-2z" fill="#6a8ad0" stroke="#2444a0"/><path d="M12 6q3 5-2 8M3 11l5-2" stroke="#3258b0" stroke-width="2" fill="none"/>',
    scopeDark: '<path d="M1 14h13" stroke="#333" stroke-width="2"/><path d="M10 0l3 2-4 8-3-2z" fill="#666" stroke="#222"/><path d="M12 6q3 5-2 8M3 11l5-2" stroke="#333" stroke-width="2" fill="none"/>',
    scales: '<path d="M8 1v12M2 3h12M4 14h8" stroke="#6a5410" stroke-width="2"/><path d="M3 4l-3 6h6zM13 4l-3 6h6z" fill="#fff6c0" stroke="#7a6414"/><path d="M0 10h6l-1 2H1zM10 10h6l-1 2h-4z" fill="#c8a830" stroke="#7a6414"/>',
    edit: '<path d="M1 1h10v14H1z" fill="#fff" stroke="#555"/><path d="M3 5.500h6M3 8.500h5M3 11.500h6" stroke="#666"/><path d="M6 12L14 3l2 2-8 8-3 1z" fill="#f0c830" stroke="#443"/>',
    copyDb: '<path d="M1 2h7v11H1z" fill="#8a7050" stroke="#443"/><path d="M3 2v11" stroke="#eee" stroke-width="2"/><path d="M10 6h6v9h-6z" fill="#fff" stroke="#444"/><path d="M11 9.500h4M11 12.500h4M9 3q4-2 5 2" stroke="#444" fill="none"/>',
    lock: '<path d="M5 5V4q0-3 3-3t4 3v4" fill="none" stroke="#555" stroke-width="2"/><path d="M3 8h11v7H3z" fill="#3c6ee8" stroke="#1c3c9c"/><path d="M4 9.500h9" stroke="#a8c4ff"/>'
};

function icon(name) {
    return '<svg class="icon" viewBox="0 0 16 16">' + icons[name] + '</svg>';
}

document.querySelectorAll('svg[data-icon]').forEach(function (svg) {
    svg.setAttribute('viewBox', '0 0 16 16');
    svg.innerHTML = icons[svg.dataset.icon];
});

// toolbars: "|" separator, "v" drop-down arrow, "*" pressed
document.querySelectorAll('.bar').forEach(function (bar) {
    var html = bar.classList.contains('joined') ? '' : '<span class="grip"></span>';
    bar.dataset.icons.split(' ').forEach(function (name) {
        if (name == '|') {
            html += '<span class="sep"></span>';
        } else if (name == 'v') {
            html += '<button class="drop" aria-label="Auswahl"></button>';
        } else {
            var on = name.endsWith('*');
            name = name.replace('*', '');
            html += '<button class="tool' + (on ? ' on' : '') + '" aria-label="' + name + '">' + icon(name) + '</button>';
        }
    });
    bar.insertAdjacentHTML('afterbegin', html);
});

// tree rows: [control, icon, label, children]
// c/r = checkbox/radio, upper case = ticked, p = partly ticked, children '+' = closed
function leaves(type, ico, list) {
    return list.split(' ').map(function (t) { return [type, ico, t]; });
}

var tree = [
    ['c', 'globalDef', 'Globale Verformungen', [['R', 'globalDef', 'u']].concat(leaves('r', 'globalDef', 'u_X u_Y u_Z φ_X φ_Y φ_Z'))],
    ['C', 'member2', 'Stäbe', [
        ['p', 'member2', 'Lokale Verformungen', leaves('r', 'member2', 'u_x u_y').concat([['R', 'member2', 'u_z']], leaves('r', 'member2', 'φ_x φ_y φ_z'))],
        ['p', 'member2', 'Schnittgrößen', [
            ['r', 'fN', 'N'], ['r', 'fVy', 'V_y'], ['r', 'fVz', 'V_z'],
            ['r', 'fMT', 'M_T'], ['r', 'fMy', 'M_y'], ['r', 'fMz', 'M_z']
        ]],
        ['p', 'member2', 'Spannungen', leaves('r', 'member2', 'σ_x τ_y τ_z').concat([
            ['p', 'member2', 'Elastischer Spannungsanteil', '+'],
            ['p', 'member2', 'Elastische Vergleichsspannungen', '+']
        ])],
        ['p', 'member2', 'Verzerrungen', leaves('r', 'member2', 'ε_x γ_xy γ_xz κ_x κ_y κ_z')]
    ]],
    ['c', 'globalDef', 'Kriterien', '+'],
    ['c', 'reaction', 'Lagerreaktionen', [
        ['C', 'reaction', 'Knotenlager', [['R', 'reaction', 'Lokal'], ['r', 'reaction', 'Global']].concat(
            leaves('C', 'reaction', "P_x' P_y' P_z'"), leaves('c', 'reaction', "M_x' M_y' M_z'"))],
        ['c', 'reaction', 'Resultierende', [['R', 'reaction', 'P'], ['r', 'reaction', 'Komponenten', '+']]]
    ]],
    ['c', 'globalDef', 'Lastverteilung', '+']
];

var groups = 0;

function rows(list) {
    var group = 'g' + groups++;
    return list.map(function (n) {
        var radio = n[0].toLowerCase() == 'r';
        var ticked = n[0] == 'R' || n[0] == 'C';
        var text = n[2].replace(/_(.+)/, '<sub>$1</sub>');
        var lead = n[3]
            ? '<span class="expander' + (n[3] == '+' ? ' plus' : '') + '"></span>'
            : '<span class="branch"></span>';
        return '<li><div class="row">' + lead + '<label><input type="' + (radio ? 'radio' : 'checkbox') + '" name="' + group + '"' +
            (ticked ? ' checked' : '') + (n[0] == 'p' ? ' data-part' : '') + '>' + icon(n[1]) + '<span>' + text + '</span></label></div>' +
            (Array.isArray(n[3]) ? '<ul>' + rows(n[3]) + '</ul>' : '') + '</li>';
    }).join('');
}

document.getElementById('tree').innerHTML = rows(tree);
document.querySelectorAll('[data-part]').forEach(function (box) {
    box.indeterminate = true;
});

// panel factors
document.getElementById('factors').innerHTML = ['Verformung', 'Stabverläufe', 'Flächenverläufe', 'Schnitte', 'Lagerkräfte', 'Trajektorien'].map(function (name, i) {
    var dis = i == 1 ? '' : ' disabled';
    return '<div class="factor"><label for="factor' + i + '">' + name + ':</label><div class="spin-row">' +
        '<input id="factor' + i + '" value="' + (i == 1 ? 1 : '') + '"' + dis + '>' +
        '<span class="spin"><button class="up" aria-label="mehr"' + dis + '></button>' +
        '<button class="down" aria-label="weniger"' + dis + '></button></span></div></div>';
}).join('');

// drawing
var out = '';

function path(cls, d) {
    out += '<path class="' + cls + '" d="M' + d + '"/>';
}

function marks(color, list) {
    list.split(' ').forEach(function (p) {
        var xy = p.split(',');
        out += '<rect class="dot-' + color + '" x="' + (xy[0] - 1.5) + '" y="' + (xy[1] - 1.5) + '" width="3" height="3"/>';
    });
}

function texts(color, list) {
    list.forEach(function (t) {
        out += '<text class="t-' + color + '" x="' + t[1] + '" y="' + (t[2] + 4) + '">' + t[0] + '</text>';
    });
}

function axes(x, y) {
    out += '<path d="M' + x + ' ' + y + 'h-34" stroke="#00f000" stroke-width="2"/>' +
        '<path d="M' + (x - 40) + ' ' + y + 'l9-3v6z" style="fill:#0aa80a"/>' +
        '<path d="M' + x + ' ' + y + 'v34" stroke="#0000f0" stroke-width="2"/>' +
        '<path d="M' + x + ' ' + (y + 41) + 'l-3-9h6z" style="fill:#0000b4"/>' +
        '<path d="M' + (x - 3) + ' ' + (y - 3) + 'l6 6m0-6l-6 6" stroke="#d20a0a" stroke-width="2"/>';
    texts('green', [['Y', x - 50, y]]);
    texts('blue', [['Z', x, y + 51]]);
}

// supports
out += '<polygon class="support" points="924,277 955,306 924,335"/>';
out += '<polygon class="support" points="916,1046 948,1076 916,1105"/>';
out += '<rect class="support" x="902" y="1046" width="3" height="59"/>';

// cross-section
path('section', '1247 358L1230 311Q1227 302 1217 302H973Q959 302 959 316V366L961 372L983 420Q988 430 979 440L963 455Q959 459 959 465V915Q959 920 955 924L939 941Q935 945 935 951V979L937 985L958 1031L959 1037V1066Q959 1080 946 1080H738Q729 1079 725 1070L706 1017');
path('section-dark', '962 374L983 420');
path('section-dark', '937 985L958 1031');
path('section-dark', '959 1068Q957 1076 953 1079');
out += '<circle class="hinge" cx="953" cy="306" r="10"/><circle class="hinge" cx="946" cy="1076" r="10"/>';
path('flange', '973 302H1217');
path('flange', '738 1080H946');
path('blue', '1217 301L1225 304L1230 311L1247 358M973 301L964 306M961 371L983 420M937 985L958 1031M738 1080L731 1078L725 1071L706 1017');
path('red', '959.5 315V371M959.5 465V915M963 455L978 441M955 924L939 941');
path('red', '935.5 951V979M959.5 1037V1066');

// upper flange
path('blue light', '1022 302V326M1071 302V350M1168 302V401M1217 302V427');
path('blue', '1119.500 302V375M1189.500 302V413');
path('blue dash', '973 306L1022 326L1071 350L1119 375L1168 401L1189 413L1217 428M973 301V306H964');
path('blue dash', '1230 311L1184 328L1175 385M1225 304L1162 352L1164 361L1230 311M1164 361L1175 385L1187 422L1181 416L1217 301M1187 422L1225 304M1230 311L1190 413M1175 385L1247 358');
marks('blue', '973,301 973,306 1022,326 1071,350 1119,375 1168,401 1189,413 1217,428 1189,301 1184,328 1162,352 1164,361 1175,385 1181,416 1187,422');
marks('red', '1217,301 1225,304 1230,311 1247,358 964,306');

// web, upper part
path('red dash', '964 306L956 314L939 366M956 315H959');
path('red light', '939 366H960');
path('blue dash', '960 369L940 368V374L961 371M961 372L941 378L953 432');
path('blue', '940 368V374L941 378M953 432L983 420M950 430L984 424M949 428L984 421');
path('red', '984 426L949 427M984 429L948 429M983 434L950 425');
path('red dash', '978 441L959 418L980 439M978 441L954 421L947 430M963 455L935 436L931 440L920 452L961 460L931 440M959 465L918 457L920 452M943 435L959 418');
path('red light', '963 455L943 435M971 447L951 426M959 465H916');
marks('blue', '940,368 940,374 941,378 953,432 950,430 983,420');
marks('red', '956,314 959,315 939,366 960,366 961,371 984,424 984,429 983,434 978,441 963,455 961,460 959,465 959,418 954,421 949,424 948,429 943,435 935,436 931,440 920,452 918,457 916,465');

// web
var web = [[916, 465], [910, 510], [906, 555], [904, 600], [904, 645], [905, 690], [908, 735], [912, 780], [917, 825], [923, 870]];
path('red light', web.map(function (p) { return p.join(' '); }).join('L') + 'L931 910');
path('red dash', web.map(function (p) { return p.join(' '); }).join('L') + 'L931 910');
web.slice(1).forEach(function (p) {
    path('red light', p[0] + ' ' + p[1] + 'H959');
    marks('red', p.join(','));
});

// web, lower part
path('red dash', '959 915L931 910L931 914L959 920L939 908L955 924L931 914M955 924L937 911L929 931L939 941L924 931L922 936L937 946L914 941L914 946L936 951H912L914 965L917 979');
path('red', '955 924L939 908M959 920L934 912');
path('red light', '935 921L947 932M929 931L939 941M914 965H935M917 979H935');
path('blue', '935 979L917 981L918 986L937 982M937 985L921 992L918 986');
path('blue dash', '921 992L952 1035M952 1034L959 1031M952 1038L959 1033M952 1034V1038H959');
path('red dash', '952 1037L955 1052L958 1066M955 1052H959');
marks('red', '959,915 959,920 955,924 939,941 937,946 935,951 935,979 931,910 931,914 939,908 935,921 929,931 924,931 922,936 914,941 914,946 912,951 914,965 917,979 958,1066 956,1076 955,1052 959,1037');
marks('blue', '917,981 918,986 921,992 937,985 952,1035 952,1038 958,1031');

// lower flange
path('blue light', '761 1080V1117M780 1080V1114M863 1080V1098M904 1080V1090M738 1080V1121');
path('blue', '821.500 1080V1106');
path('blue dash', '946 1082L905 1090L863 1098L821 1106L780 1114L761 1117L739 1121V1080M706 1017L681 1026L711 1076L725 1071L704 1088L710 1093L731 1078L718 1116L727 1117L738 1080M710 1093L718 1116');
marks('blue', '905,1090 863,1098 821,1106 780,1114 761,1117 739,1121 761,1080 681,1026 711,1076 704,1088 710,1093 718,1116 727,1117');
marks('red', '706,1017 725,1071 731,1078 738,1080 946,1080');

// load
out += '<path d="M1189 134V222" stroke="#000078" stroke-width="2"/><path d="M1189 229l-3-8h6z" style="fill:#000050"/>';

axes(959, 690);
axes(391, 1029);

texts('blue', [['1.0', 1202, 135], ['0.1', 975, 317], ['0.3', 1022, 338], ['0.6', 1071, 361], ['1.0', 1119, 386], ['1.3', 1168, 412], ['1.6', 1187, 434],
    ['1.7', 1217, 439], ['0.6', 1172, 328], ['1.1', 1155, 362], ['1.0', 1165, 385], ['0.3', 928, 368], ['0.2', 909, 992], ['0.4', 669, 1026],
    ['0.4', 692, 1088], ['0.5', 718, 1128], ['0.6', 739, 1133], ['0.5', 761, 1128], ['0.4', 780, 1125], ['0.3', 821, 1117], ['0.2', 863, 1109], ['0.1', 905, 1101]]);
texts('red', [['-0.1', 944, 314], ['-0.5', 935, 425], ['-0.6', 903, 465], ['-0.7', 897, 510], ['-0.7', 893, 555], ['-0.7', 891, 600], ['-0.7', 891, 645],
    ['-0.7', 892, 690], ['-0.7', 895, 735], ['-0.6', 899, 780], ['-0.6', 905, 825], ['-0.5', 911, 870], ['-0.4', 919, 909], ['-0.2', 942, 901],
    ['-0.3', 901, 941], ['-0.3', 902, 965], ['-0.2', 904, 979], ['-0.1', 940, 1038], ['-0.1', 943, 1052]]);

document.getElementById('drawing').innerHTML = out;
```
